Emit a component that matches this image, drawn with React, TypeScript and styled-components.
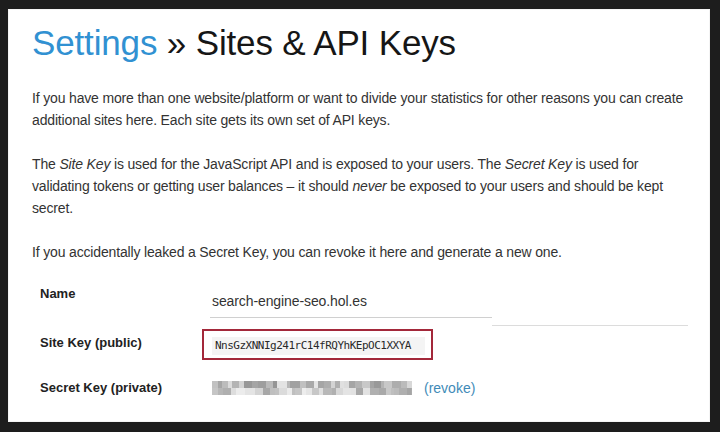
import React from 'react'
import styled, { createGlobalStyle } from 'styled-components'

const GlobalStyle = createGlobalStyle`
  html, body {
    margin: 0;
    padding: 0;
    background: #1d1d1d;
  }
  body {
    font-family: "Liberation Sans", Arial, sans-serif;
  }
`

// fake pixelated blur for the hidden secret key
const makeBlur = () => {
  let seed = 7
  const rnd = () => {
    seed = (seed * 9301 + 49297) % 233280
    return seed / 233280
  }
  const layer = (from: number, to: number) => {
    const stops: string[] = []
    let x = 0
    while (x < 100) {
      const w = 1.5 + rnd() * 3.5
      const g = Math.round(from + rnd() * (to - from))
      const c = `rgb(${g},${g},${g})`
      stops.push(`${c} ${x.toFixed(1)}%`, `${c} ${Math.min(100, x + w).toFixed(1)}%`)
      x += w
    }
    return `linear-gradient(90deg, ${stops.join(', ')})`
  }
  return [layer(145, 230), layer(165, 238)]
}

const blur = makeBlur()

const App = () => {
  return (
    <>
      <GlobalStyle />
      <Frame>
        <Panel>
          <Title>
            <Crumb>Settings</Crumb> » Sites &amp; API Keys
          </Title>
          <Text>
            If you have more than one website/platform or want to divide your statistics for other reasons you can create
            additional sites here. Each site gets its own set of API keys.
          </Text>
          <Text>
            The <em>Site Key</em> is used for the JavaScript API and is exposed to your users. The <em>Secret Key</em> is used for
            validating tokens or getting user balances – it should <em>never</em> be exposed to your users and should be kept
            secret.
          </Text>
          <Text>If you accidentally leaked a Secret Key, you can revoke it here and generate a new one.</Text>

          <KeyTable>
            <NameRow>
              <Label top={23}>Name</Label>
              <NameInput>search-engine-seo.hol.es</NameInput>
              <Filler />
            </NameRow>
            <Row>
              <Label top={9}>Site Key (public)</Label>
              <KeyBox>
                <KeyText>NnsGzXNNIg241rC14fRQYhKEpOC1XXYA</KeyText>
              </KeyBox>
            </Row>
            <Row>
              <Label top={20}>Secret Key (private)</Label>
              <SecretWrap>
                <Blurred style={{ backgroundImage: `${blur[0]}, ${blur[1]}` }} />
                <Revoke href="#">(revoke)</Revoke>
              </SecretWrap>
            </Row>
          </KeyTable>
        </Panel>
      </Frame>
    </>
  )
}

const Frame = styled.div`
width: 720px;
height: 432px;
box-sizing: border-box;
padding: 9px 10px 10px 8px;
display: flex;
`

const Panel = styled.div`
flex: 1;
background: #ffffff;
padding: 12px 22px 0 24px;
box-shadow: inset 0 0 0 1px #f4f4f4;
overflow: hidden;
`

const Title = styled.h1`
margin: 0;
font-size: 35px;
line-height: 44px;
font-weight: 400;
color: #161616;
letter-spacing: -0.15px;
`

const Crumb = styled.span`
color: #3191d2;
`

const Text = styled.p`
margin: 22px 0 0;
font-size: 14px;
line-height: 22px;
letter-spacing: -0.16px;
color: #333333;

em {
  font-style: italic;
}
`

const KeyTable = styled.div`
display: flex;
flex-direction: column;
padding-left: 8px;
`

const Row = styled.div`
display: flex;
align-items: flex-start;
`

const NameRow = styled(Row)`
height: 63px;
align-items: stretch;
`

const Label = styled.div<{ top: number }>`
width: 162px;
flex: none;
padding-top: ${p => p.top}px;
font-size: 13px;
line-height: 16px;
font-weight: 700;
color: #222222;
`

const NameInput = styled.div`
width: 280px;
margin: 28px 0 0 8px;
padding: 0 0 6px 2px;
align-self: flex-start;
font-size: 14px;
line-height: 20px;
letter-spacing: -0.1px;
color: #333333;
border-bottom: 1px solid #d0d0d0;
`

const Filler = styled.div`
flex: 1;
border-bottom: 1px solid #dcdcdc;
`

const KeyBox = styled.div`
margin-top: 3px;
width: 231px;
height: 31px;
box-sizing: border-box;
border: 2px solid #a3283a;
padding: 4px 0 0 8px;
`

const KeyText = styled.span`
display: inline-block;
background: #f4f4f4;
padding: 1px 14px 1px 3px;
font-family: "DejaVu Sans Mono", monospace;
font-size: 11px;
line-height: 16px;
letter-spacing: -0.5px;
color: #2a2a2a;
`

const SecretWrap = styled.div`
display: flex;
align-items: center;
gap: 12px;
margin: 18px 0 0 10px;
`

const Blurred = styled.div`
width: 200px;
height: 14px;
background-size: 100% 50%, 100% 50%;
background-position: 0 0, 0 100%;
background-repeat: no-repeat;
`

const Revoke = styled.a`
font-size: 14px;
line-height: 20px;
color: #3f8bb8;
text-decoration: none;
`

export default App
